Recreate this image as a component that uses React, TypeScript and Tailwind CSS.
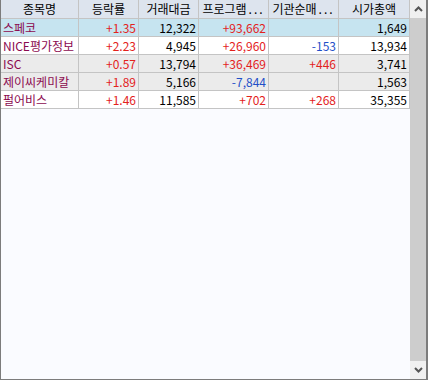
import React from "react";

type Row = {
  name: string;
  rate: string;
  amount: string;
  program: string;
  inst: string;
  cap: string;
  bg: string;
};

const rows: Row[] = [
  { name: "스페코", rate: "+1.35", amount: "12,322", program: "+93,662", inst: "", cap: "1,649", bg: "bg-[#c6e4f0]" },
  { name: "NICE평가정보", rate: "+2.23", amount: "4,945", program: "+26,960", inst: "-153", cap: "13,934", bg: "bg-white" },
  { name: "ISC", rate: "+0.57", amount: "13,794", program: "+36,469", inst: "+446", cap: "3,741", bg: "bg-[#ebebeb]" },
  { name: "제이씨케미칼", rate: "+1.89", amount: "5,166", program: "-7,844", inst: "", cap: "1,563", bg: "bg-[#ebebeb]" },
  { name: "펄어비스", rate: "+1.46", amount: "11,585", program: "+702", inst: "+268", cap: "35,355", bg: "bg-white" },
];

const cols = "grid grid-cols-[78px_60px_60px_70px_70px_71px]";

// sign decides the colour of a number
function signColor(v: string) {
  if (v.startsWith("+")) return "text-[#e3221c]";
  if (v.startsWith("-")) return "text-[#1f4fc8]";
  return "text-black";
}

function Cell({ value, className = "" }: { value: string; className?: string }) {
  return (
    <div className={`h-[18px] border-r border-b border-[#c4c4c4] px-[2px] flex items-center justify-end leading-none ${className}`}>
      {value}
    </div>
  );
}

function Chevron({ up }: { up?: boolean }) {
  return (
    <svg width="9" height="6" viewBox="0 0 9 6" className="text-[#555]">
      <path d={up ? "M1 5L4.5 1.5L8 5" : "M1 1L4.5 4.5L8 1"} fill="none" stroke="currentColor" strokeWidth={2} />
    </svg>
  );
}

const headers: { label: string; cut?: boolean }[] = [
  { label: "종목명" },
  { label: "등락률" },
  { label: "거래대금" },
  { label: "프로그램", cut: true },
  { label: "기관순매", cut: true },
  { label: "시가총액" },
];

export default function App() {
  return (
    <div
      className="w-[428px] h-[380px] flex border-l border-b border-r-2 border-[#7c7c7c] bg-[#fafbff] text-[12px] overflow-hidden"
      style={{ fontFamily: '"Noto Sans CJK KR", "Liberation Sans", sans-serif' }}
    >
      <div className="w-[409px] flex flex-col">
        {/* header */}
        <div className={`${cols} bg-[#dde4ee] text-black`}>
          {headers.map((h) => (
            <div key={h.label} className="h-[19px] border-r border-b border-[#c4c4c4] flex items-center justify-center leading-none whitespace-nowrap overflow-hidden">
              {h.label}
              {h.cut && <span className="tracking-[2px] ml-[2px]">...</span>}
            </div>
          ))}
        </div>
        {rows.map((r) => (
          <div key={r.name} className={`${cols} ${r.bg}`}>
            <div className="h-[18px] border-r border-b border-[#c4c4c4] px-[2px] flex items-center leading-none text-[#8b0a4f] whitespace-nowrap overflow-hidden">
              {r.name}
            </div>
            <Cell value={r.rate} className={signColor(r.rate)} />
            <Cell value={r.amount} />
            <Cell value={r.program} className={signColor(r.program)} />
            <Cell value={r.inst} className={signColor(r.inst)} />
            <Cell value={r.cap} />
          </div>
        ))}
      </div>
      {/* scrollbar */}
      <div className="w-[16px] flex flex-col bg-[#cdcdcd]">
        <div className="h-[18px] bg-[#f0f0f0] flex items-center justify-center">
          <Chevron up />
        </div>
        <div className="flex-1" />
        <div className="h-[18px] bg-[#f0f0f0] flex items-center justify-center">
          <Chevron />
        </div>
      </div>
    </div>
  );
}
